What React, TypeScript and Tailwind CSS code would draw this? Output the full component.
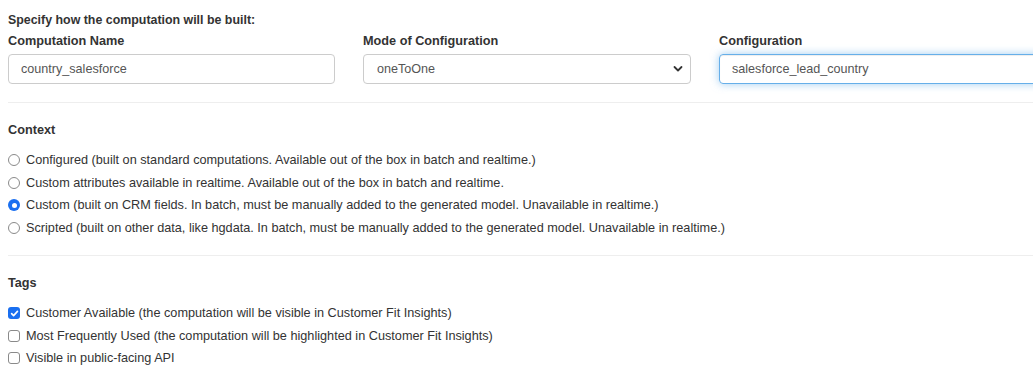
import React from 'react';

const contexts = [
  'Configured (built on standard computations. Available out of the box in batch and realtime.)',
  'Custom attributes available in realtime. Available out of the box in batch and realtime.',
  'Custom (built on CRM fields. In batch, must be manually added to the generated model. Unavailable in realtime.)',
  'Scripted (built on other data, like hgdata. In batch, must be manually added to the generated model. Unavailable in realtime.)',
];

const tags = [
  { label: 'Customer Available (the computation will be visible in Customer Fit Insights)', checked: true },
  { label: 'Most Frequently Used (the computation will be highlighted in Customer Fit Insights)', checked: false },
  { label: 'Visible in public-facing API', checked: false },
];

function Radio({ checked }: { checked: boolean }) {
  if (checked) {
    return (
      <span className="flex h-[12px] w-[12px] shrink-0 items-center justify-center rounded-full bg-[#1a6ff0]">
        <span className="h-[5px] w-[5px] rounded-full bg-white" />
      </span>
    );
  }
  return <span className="h-[12px] w-[12px] shrink-0 rounded-full border border-[#8a8a8a] bg-white" />;
}

function Checkbox({ checked }: { checked: boolean }) {
  if (checked) {
    return (
      <span className="flex h-[12px] w-[12px] shrink-0 items-center justify-center rounded-[3px] bg-[#1a6ff0]">
        <svg width="9" height="9" viewBox="0 0 10 10" fill="none">
          <path d="M1.8 5.2 4 7.4 8.3 2.6" stroke="white" strokeWidth="1.8" strokeLinecap="round" strokeLinejoin="round" />
        </svg>
      </span>
    );
  }
  return <span className="h-[12px] w-[12px] shrink-0 rounded-[3px] border border-[#8a8a8a] bg-white" />;
}

export default function App() {
  return (
    <div
      className="w-[1033px] overflow-hidden bg-white px-2 pt-[10px] pb-4 text-[12.7px] leading-[20px] text-[#333]"
      style={{ fontFamily: '"Liberation Sans", Arial, sans-serif' }}
    >
      <p className="text-[12.4px] font-bold">Specify how the computation will be built:</p>

      <div className="mt-px grid w-[1039px] grid-cols-[327px_328px_328px] gap-x-[28px]">
        <div>
          <label className="mb-[3px] block font-bold">Computation Name</label>
          <input
            readOnly
            value="country_salesforce"
            className="h-[30px] w-full rounded-[4px] border border-[#ccc] px-3 text-[12.6px] text-[#555] outline-none"
          />
        </div>
        <div>
          <label className="mb-[3px] block font-bold">Mode of Configuration</label>
          <div className="relative">
            <select
              defaultValue="oneToOne"
              className="h-[30px] w-full appearance-none rounded-[4px] border border-[#ccc] bg-white px-[13px] text-[12.6px] text-[#555] outline-none"
            >
              <option value="oneToOne">oneToOne</option>
              <option value="oneToMany">oneToMany</option>
            </select>
            <svg
              className="pointer-events-none absolute top-[11px] right-[8px]"
              width="10"
              height="8"
              viewBox="0 0 10 8"
              fill="none"
            >
              <path d="M1.5 2 5 5.5 8.5 2" stroke="#333" strokeWidth="1.8" strokeLinecap="round" strokeLinejoin="round" />
            </svg>
          </div>
        </div>
        <div>
          <label className="mb-[3px] block font-bold">Configuration</label>
          <input
            readOnly
            value="salesforce_lead_country"
            className="h-[30px] w-full rounded-[4px] border border-[#66afe9] px-3 text-[12.6px] text-[#555] shadow-[inset_0_1px_1px_rgba(0,0,0,0.075),0_0_8px_rgba(102,175,233,0.6)] outline-none"
          />
        </div>
      </div>

      <hr className="mt-[18px] -mr-2 border-t border-[#eee]" />

      <p className="mt-[17px] font-bold">Context</p>
      <div className="mt-[9px]">
        {contexts.map((c, i) => (
          <label key={c} className="flex h-[22.5px] items-center gap-[6px]">
            <Radio checked={i === 2} />
            <span>{c}</span>
          </label>
        ))}
      </div>

      <hr className="mt-[16px] -mr-2 border-t border-[#eee]" />

      <p className="mt-[17px] font-bold">Tags</p>
      <div className="mt-[9px]">
        {tags.map((t) => (
          <label key={t.label} className="flex h-[22.5px] items-center gap-[6px]">
            <Checkbox checked={t.checked} />
            <span>{t.label}</span>
          </label>
        ))}
      </div>
    </div>
  );
}
